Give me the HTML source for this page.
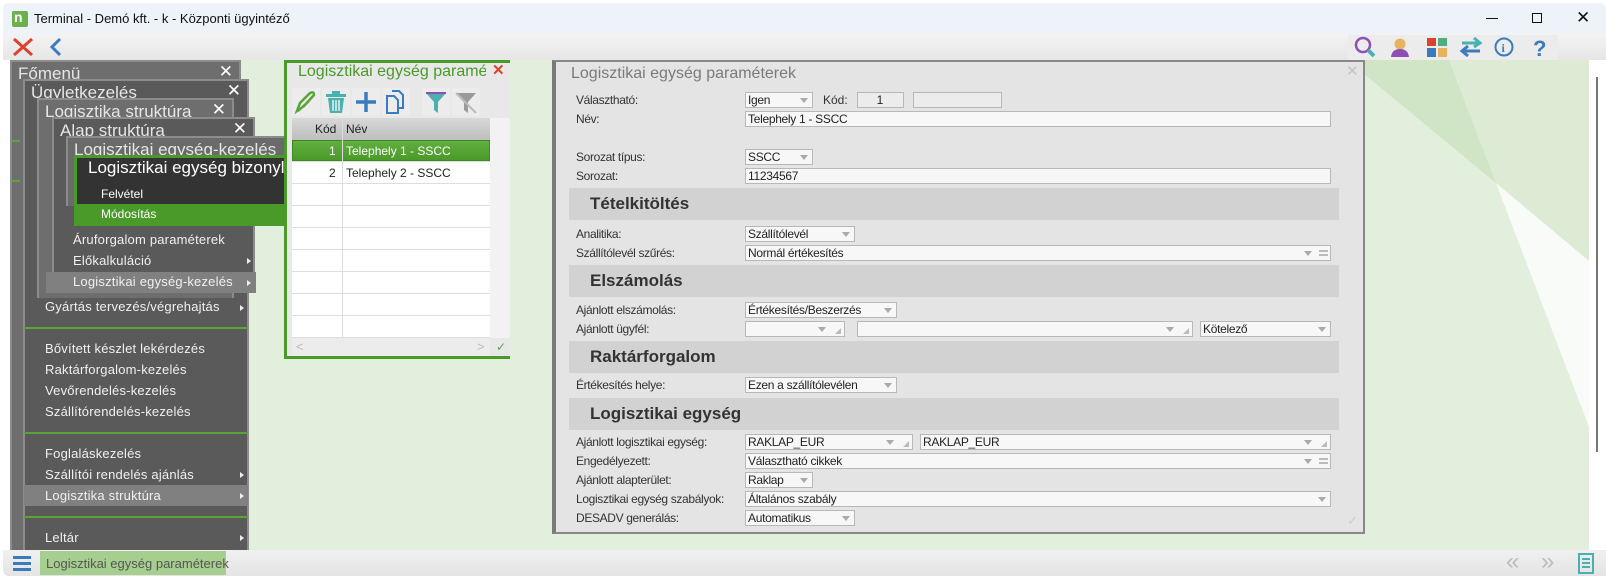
<!DOCTYPE html>
<html><head><meta charset="utf-8"><style>
*{margin:0;padding:0;box-sizing:border-box}
body{width:1606px;height:579px;overflow:hidden;background:#fff;font-family:"Liberation Sans",sans-serif;position:relative}
.a{position:absolute}
.t{position:absolute;white-space:nowrap}
.mh{position:absolute;background:#5a5a5a;border:2px solid #8c8c8c;border-bottom:none}
.mh span{position:absolute;left:6px;top:2px;font-size:17px;color:#e6e6e6;white-space:nowrap}
.mh b{position:absolute;right:6px;top:0px;font-size:17px;color:#fff;font-weight:normal}
.mi{position:absolute;font-size:13px;color:#f0f0f0;white-space:nowrap;letter-spacing:0.2px}
.ar{position:absolute;width:0;height:0;border-left:4px solid #eee;border-top:3px solid transparent;border-bottom:3px solid transparent}
.sep{position:absolute;height:2px;background:#5aa53a}
.lb{position:absolute;font-size:12px;color:#333;white-space:nowrap;left:576px;letter-spacing:-0.35px}
.f{position:absolute;height:16px;background:#f7f7f7;border:1px solid #b8b8b8;font-size:12px;color:#222;padding-left:2px;line-height:14px;white-space:nowrap;overflow:hidden;letter-spacing:-0.3px}
.f i{position:absolute;right:4px;top:5px;width:0;height:0;border-left:4px solid transparent;border-right:4px solid transparent;border-top:5px solid #aaa}
.f u{position:absolute;right:2px;top:4px;width:9px;border-top:2px solid #bbb;border-bottom:2px solid #bbb;height:6px}
.f i.w{right:18px}
.f s{position:absolute;right:3px;bottom:2px;width:0;height:0;border-left:6px solid transparent;border-bottom:6px solid #bbb}
.sh{position:absolute;left:569px;width:770px;height:32px;background:#d2d2d2}
.sh span{position:absolute;left:21px;top:6px;font-size:17px;font-weight:bold;color:#333}
</style></head><body>
<!-- window frame -->
<div class="a" style="left:3px;top:3px;width:1603px;height:32px;background:#eef2f9;border-top-left-radius:6px;border-top-right-radius:6px"></div>
<div class="a" style="left:12px;top:11px;width:16px;height:16px;background:#6ab04c;border-radius:2px"></div>
<div class="t" style="left:14px;top:9px;font-size:14px;color:#fff;font-weight:bold">n</div>
<div class="t" style="left:34px;top:11px;font-size:13px;color:#111">Terminal - Demó kft. - k - Központi ügyintéző</div>
<div class="a" style="left:1486px;top:18px;width:12px;height:1px;background:#111"></div>
<div class="a" style="left:1532px;top:13px;width:10px;height:10px;border:1px solid #111"></div>
<div class="t" style="left:1576px;top:8px;font-size:17px;color:#111">✕</div>
<!-- toolbar -->
<div class="a" style="left:3px;top:34px;width:1603px;height:26px;background:linear-gradient(#f3f3f3,#e6e6e6)"></div>
<svg class="a" style="left:12px;top:37px" width="22" height="20"><path d="M2 2L20 18M20 2L2 18" stroke="#d9432f" stroke-width="3"/></svg>
<svg class="a" style="left:48px;top:37px" width="16" height="20"><path d="M12 2L4 10L12 18" stroke="#3a7bbf" stroke-width="3" fill="none"/></svg>
<div class="a" style="left:1348px;top:35px;width:210px;height:25px;background:#ececec"></div>
<svg class="a" style="left:1352px;top:35px" width="210" height="24">
<circle cx="11" cy="10" r="7" stroke="#8e4fb5" stroke-width="2.5" fill="none"/><path d="M16 15L22 21" stroke="#4bb0b0" stroke-width="4"/>
<circle cx="48" cy="9" r="5.5" fill="#e9b25e"/><path d="M39 22Q40 14 48 14Q56 14 57 22Z" fill="#8e4fb5"/>
<rect x="75" y="3" width="9" height="8" fill="#d9432f"/><rect x="86" y="3" width="9" height="8" fill="#4caf7d"/><rect x="75" y="13" width="9" height="9" fill="#3a7bbf"/><rect x="86" y="13" width="9" height="9" fill="#e9b25e"/>
<path d="M110 8H126M122 3L128 8L122 12" stroke="#4bb0b0" stroke-width="3" fill="none"/><path d="M128 16H112M116 11L110 16L116 21" stroke="#3a7bbf" stroke-width="3" fill="none"/>
<circle cx="152" cy="12" r="8.5" stroke="#3a7bbf" stroke-width="2" fill="none"/><text x="149.5" y="17" font-size="12" font-weight="bold" fill="#3a7bbf" font-family="Liberation Serif">i</text>
<text x="181" y="21" font-size="22" font-weight="bold" fill="#3a7bbf" font-family="Liberation Sans">?</text>
</svg>
<!-- content bg -->
<div class="a" style="left:3px;top:60px;width:1586px;height:490px;background:#e3efdd"></div>
<svg class="a" style="left:0;top:0" width="1606" height="579"><polygon points="1364,60 1449,60 1496,183 1364,74" fill="#cfe5c5"/><polygon points="1449,60 1589,60 1589,261 1496,183" fill="#ddebd5"/><polygon points="1496,183 1589,261 1589,427" fill="#f8fbf7"/></svg>
<div class="a" style="left:1589px;top:60px;width:17px;height:490px;background:#fff"></div>
<div class="a" style="left:1596px;top:77px;width:2px;height:375px;background:#777"></div>
<div class="a" style="left:0;top:60px;width:10px;height:490px;background:#fff"></div>
<!-- menu stack -->
<div class="mh" style="left:10px;top:60px;width:231px;height:490px;background:#6e6e6e"><span style="left:6px;top:2px">Főmenü</span><b>✕</b></div>
<div class="a" style="left:12px;top:140px;width:8px;height:2px;background:#5aa53a"></div>
<div class="a" style="left:12px;top:180px;width:8px;height:2px;background:#5aa53a"></div>
<div class="mh" style="left:23px;top:79px;width:226px;height:471px"><span>Ügyletkezelés</span><b>✕</b></div>
<div class="mh" style="left:37px;top:98px;width:197px;height:200px;background:#6e6e6e"><span>Logisztika struktúra</span><b>✕</b></div>
<div class="mh" style="left:52px;top:117px;width:203px;height:176px;background:#5a5a5a"><span>Alap struktúra</span><b>✕</b></div>
<div class="mh" style="left:66px;top:136px;width:220px;height:70px;background:#6a6a6a"><span>Logisztikai egység-kezelés</span></div>
<div class="a" style="left:74px;top:155px;width:210px;height:71px;background:#333;border-left:3px solid #4a9a2a;border-top:3px solid #4a9a2a"></div>
<div class="t" style="left:88px;top:158px;font-size:17px;color:#fff">Logisztikai egység bizonyla</div>
<div class="t" style="left:101px;top:187px;font-size:12px;color:#fff">Felvétel</div>
<div class="a" style="left:77px;top:204px;width:207px;height:22px;background:#4a9a2a"></div>
<div class="t" style="left:101px;top:207px;font-size:12px;color:#fff">Módosítás</div>
<div class="mi" style="left:73px;top:232px">Áruforgalom paraméterek</div>
<div class="mi" style="left:73px;top:253px">Előkalkuláció</div><div class="ar" style="left:247px;top:258px"></div>
<div class="a" style="left:46px;top:272px;width:210px;height:21px;background:#808080"></div>
<div class="mi" style="left:73px;top:274px">Logisztikai egység-kezelés</div><div class="ar" style="left:247px;top:280px"></div>
<div class="mi" style="left:45px;top:299px">Gyártás tervezés/végrehajtás</div><div class="ar" style="left:240px;top:305px"></div>
<div class="sep" style="left:24px;top:327px;width:224px"></div>
<div class="mi" style="left:45px;top:341px">Bővített készlet lekérdezés</div>
<div class="mi" style="left:45px;top:362px">Raktárforgalom-kezelés</div>
<div class="mi" style="left:45px;top:383px">Vevőrendelés-kezelés</div>
<div class="mi" style="left:45px;top:404px">Szállítórendelés-kezelés</div>
<div class="sep" style="left:24px;top:432px;width:224px"></div>
<div class="mi" style="left:45px;top:446px">Foglaláskezelés</div>
<div class="mi" style="left:45px;top:467px">Szállítói rendelés ajánlás</div><div class="ar" style="left:240px;top:472px"></div>
<div class="a" style="left:24px;top:485px;width:224px;height:21px;background:#808080"></div>
<div class="mi" style="left:45px;top:488px">Logisztika struktúra</div><div class="ar" style="left:240px;top:493px"></div>
<div class="sep" style="left:24px;top:516px;width:224px"></div>
<div class="mi" style="left:45px;top:530px">Leltár</div><div class="ar" style="left:240px;top:535px"></div>
<!-- list window -->
<div class="a" style="left:284px;top:60px;width:226px;height:299px;background:#e8e8e8;border:3px solid #4a9a2a;border-right:none"></div>
<div class="t" style="left:298px;top:63px;font-size:16px;color:#4a9a2a;width:188px;overflow:hidden">Logisztikai egység paraméterek</div>
<div class="t" style="left:492px;top:61px;font-size:15px;color:#d9432f;font-weight:bold">✕</div>
<svg class="a" style="left:290px;top:87px" width="200" height="30">
<rect x="2" y="1" width="28" height="28" fill="#ececec"/><rect x="32" y="1" width="28" height="28" fill="#ececec"/><rect x="62" y="1" width="28" height="28" fill="#ececec"/><rect x="92" y="1" width="28" height="28" fill="#ececec"/><rect x="132" y="1" width="28" height="28" fill="#ececec"/><rect x="162" y="1" width="28" height="28" fill="#ececec"/>
<path d="M7 24L10 16L20 6Q24 4 24 8L14 19ZM8 24L19 14" stroke="#5aa53a" stroke-width="2.5" fill="none"/>
<rect x="36" y="7" width="20" height="3" fill="#4bb0b0"/><rect x="42" y="4" width="8" height="3" fill="#4bb0b0"/><path d="M38 11H54L52 26H40Z" fill="#4bb0b0"/><path d="M43 13V24M46 13V24M49 13V24" stroke="#fff" stroke-width="1.3"/>
<path d="M76 5V25M66 15H86" stroke="#3a7bbf" stroke-width="3.5"/>
<path d="M97 9H104L108 13V26H97Z" fill="none" stroke="#3a7bbf" stroke-width="2"/><path d="M102 4H109L113 8V21H108" fill="none" stroke="#3a7bbf" stroke-width="2"/>
<path d="M136 6H156L148 15V26L144 23V15Z" fill="#4bb0b0"/><rect x="136" y="5" width="20" height="2" fill="#8e4fb5"/>
<path d="M166 6H186L178 15V26L174 23V15Z" fill="#9a9a9a"/><path d="M166 6L186 26" stroke="#bbb" stroke-width="2"/>
</svg>
<div class="a" style="left:292px;top:118px;width:198px;height:22px;background:linear-gradient(#d8d8d8,#bdbdbd)"></div>
<div class="t" style="left:315px;top:122px;font-size:12px;color:#222">Kód</div>
<div class="t" style="left:346px;top:122px;font-size:12px;color:#222">Név</div>
<div class="a" style="left:292px;top:140px;width:198px;height:198px;background:#fff;background-image:repeating-linear-gradient(#fff 0,#fff 21px,#ddd 21px,#ddd 22px)"></div>
<div class="a" style="left:292px;top:140px;width:198px;height:21px;background:linear-gradient(#62ae40,#4a9a2a);border:1px solid #3e8a22"></div>
<div class="a" style="left:342px;top:118px;width:1px;height:220px;background:#ddd"></div>
<div class="t" style="left:329px;top:144px;font-size:12px;color:#fff">1</div>
<div class="t" style="left:346px;top:144px;font-size:12px;color:#fff">Telephely 1 - SSCC</div>
<div class="t" style="left:329px;top:166px;font-size:12px;color:#222">2</div>
<div class="t" style="left:346px;top:166px;font-size:12px;color:#222">Telephely 2 - SSCC</div>
<div class="a" style="left:490px;top:118px;width:20px;height:220px;background:#f2f2f2"></div>
<div class="a" style="left:292px;top:338px;width:198px;height:18px;background:#ececec"></div>
<div class="t" style="left:296px;top:339px;font-size:13px;color:#bbb">&lt;</div>
<div class="t" style="left:477px;top:339px;font-size:13px;color:#bbb">&gt;</div>
<div class="t" style="left:496px;top:340px;font-size:12px;color:#5aa53a">✓</div>
<!-- form dialog -->
<div class="a" style="left:552px;top:60px;width:813px;height:474px;background:#e4e4e4;border:2px solid #888;border-left:4px solid #7a7a7a"></div>
<div class="t" style="left:571px;top:65px;font-size:16px;color:#7a7a7a">Logisztikai egység paraméterek</div>
<div class="t" style="left:1346px;top:62px;font-size:15px;color:#c4c4c4">✕</div>
<div class="lb" style="top:93px">Választható:</div><div class="f" style="left:745px;top:92px;width:68px">Igen<i></i></div>
<div class="t" style="left:823px;top:93px;font-size:12px;color:#333">Kód:</div>
<div class="f" style="left:857px;top:92px;width:47px;background:#ececec;text-align:right;padding-right:20px">1</div>
<div class="f" style="left:913px;top:92px;width:89px;background:#ececec"></div>
<div class="lb" style="top:112px">Név:</div><div class="f" style="left:745px;top:111px;width:586px">Telephely 1 - SSCC</div>
<div class="lb" style="top:150px">Sorozat típus:</div><div class="f" style="left:745px;top:149px;width:68px">SSCC<i></i></div>
<div class="lb" style="top:169px">Sorozat:</div><div class="f" style="left:745px;top:168px;width:586px">11234567</div>
<div class="sh" style="top:188px"><span>Tételkitöltés</span></div>
<div class="lb" style="top:227px">Analitika:</div><div class="f" style="left:745px;top:226px;width:110px">Szállítólevél<i></i></div>
<div class="lb" style="top:246px">Szállítólevél szűrés:</div><div class="f" style="left:745px;top:245px;width:586px">Normál értékesítés<i class="w"></i><u></u></div>
<div class="sh" style="top:265px"><span>Elszámolás</span></div>
<div class="lb" style="top:303px">Ajánlott elszámolás:</div><div class="f" style="left:745px;top:302px;width:152px">Értékesítés/Beszerzés<i></i></div>
<div class="lb" style="top:322px">Ajánlott ügyfél:</div>
<div class="f" style="left:745px;top:321px;width:100px"><i class="w"></i><s></s></div>
<div class="f" style="left:857px;top:321px;width:336px"><i class="w"></i><s></s></div>
<div class="f" style="left:1200px;top:321px;width:131px">Kötelező<i></i></div>
<div class="sh" style="top:341px"><span>Raktárforgalom</span></div>
<div class="lb" style="top:378px">Értékesítés helye:</div><div class="f" style="left:745px;top:377px;width:152px">Ezen a szállítólevélen<i></i></div>
<div class="sh" style="top:398px"><span>Logisztikai egység</span></div>
<div class="lb" style="top:435px">Ajánlott logisztikai egység:</div>
<div class="f" style="left:745px;top:434px;width:168px">RAKLAP_EUR<i class="w"></i><s></s></div>
<div class="f" style="left:920px;top:434px;width:411px">RAKLAP_EUR<i class="w"></i><s></s></div>
<div class="lb" style="top:454px">Engedélyezett:</div><div class="f" style="left:745px;top:453px;width:586px">Választható cikkek<i class="w"></i><u></u></div>
<div class="lb" style="top:473px">Ajánlott alapterület:</div><div class="f" style="left:745px;top:472px;width:68px">Raklap<i></i></div>
<div class="lb" style="top:492px">Logisztikai egység szabályok:</div><div class="f" style="left:745px;top:491px;width:586px">Általános szabály<i></i></div>
<div class="lb" style="top:511px">DESADV generálás:</div><div class="f" style="left:745px;top:510px;width:110px">Automatikus<i></i></div>
<div class="t" style="left:1347px;top:513px;font-size:13px;color:#ccc">✓</div>
<!-- bottom bar -->
<div class="a" style="left:3px;top:550px;width:1603px;height:26px;background:linear-gradient(#f0f0f0,#e4e4e4);border-bottom-left-radius:6px"></div>
<div class="a" style="left:13px;top:556px;width:18px;height:3px;background:#3a7bbf;box-shadow:0 6px 0 #3a7bbf,0 12px 0 #3a7bbf"></div>
<div class="a" style="left:40px;top:551px;width:186px;height:24px;background:#a6cf8f"></div>
<div class="t" style="left:46px;top:556px;font-size:13px;color:#555">Logisztikai egység paraméterek</div>
<div class="t" style="left:1506px;top:548px;font-size:24px;color:#bbb">«</div>
<div class="t" style="left:1541px;top:548px;font-size:24px;color:#bbb">»</div>
<svg class="a" style="left:1576px;top:553px" width="20" height="22"><rect x="3" y="1" width="14" height="19" fill="none" stroke="#4bb0b0" stroke-width="2"/><path d="M6 6H14M6 10H14M6 14H14" stroke="#4bb0b0" stroke-width="2"/></svg>
</body></html>
